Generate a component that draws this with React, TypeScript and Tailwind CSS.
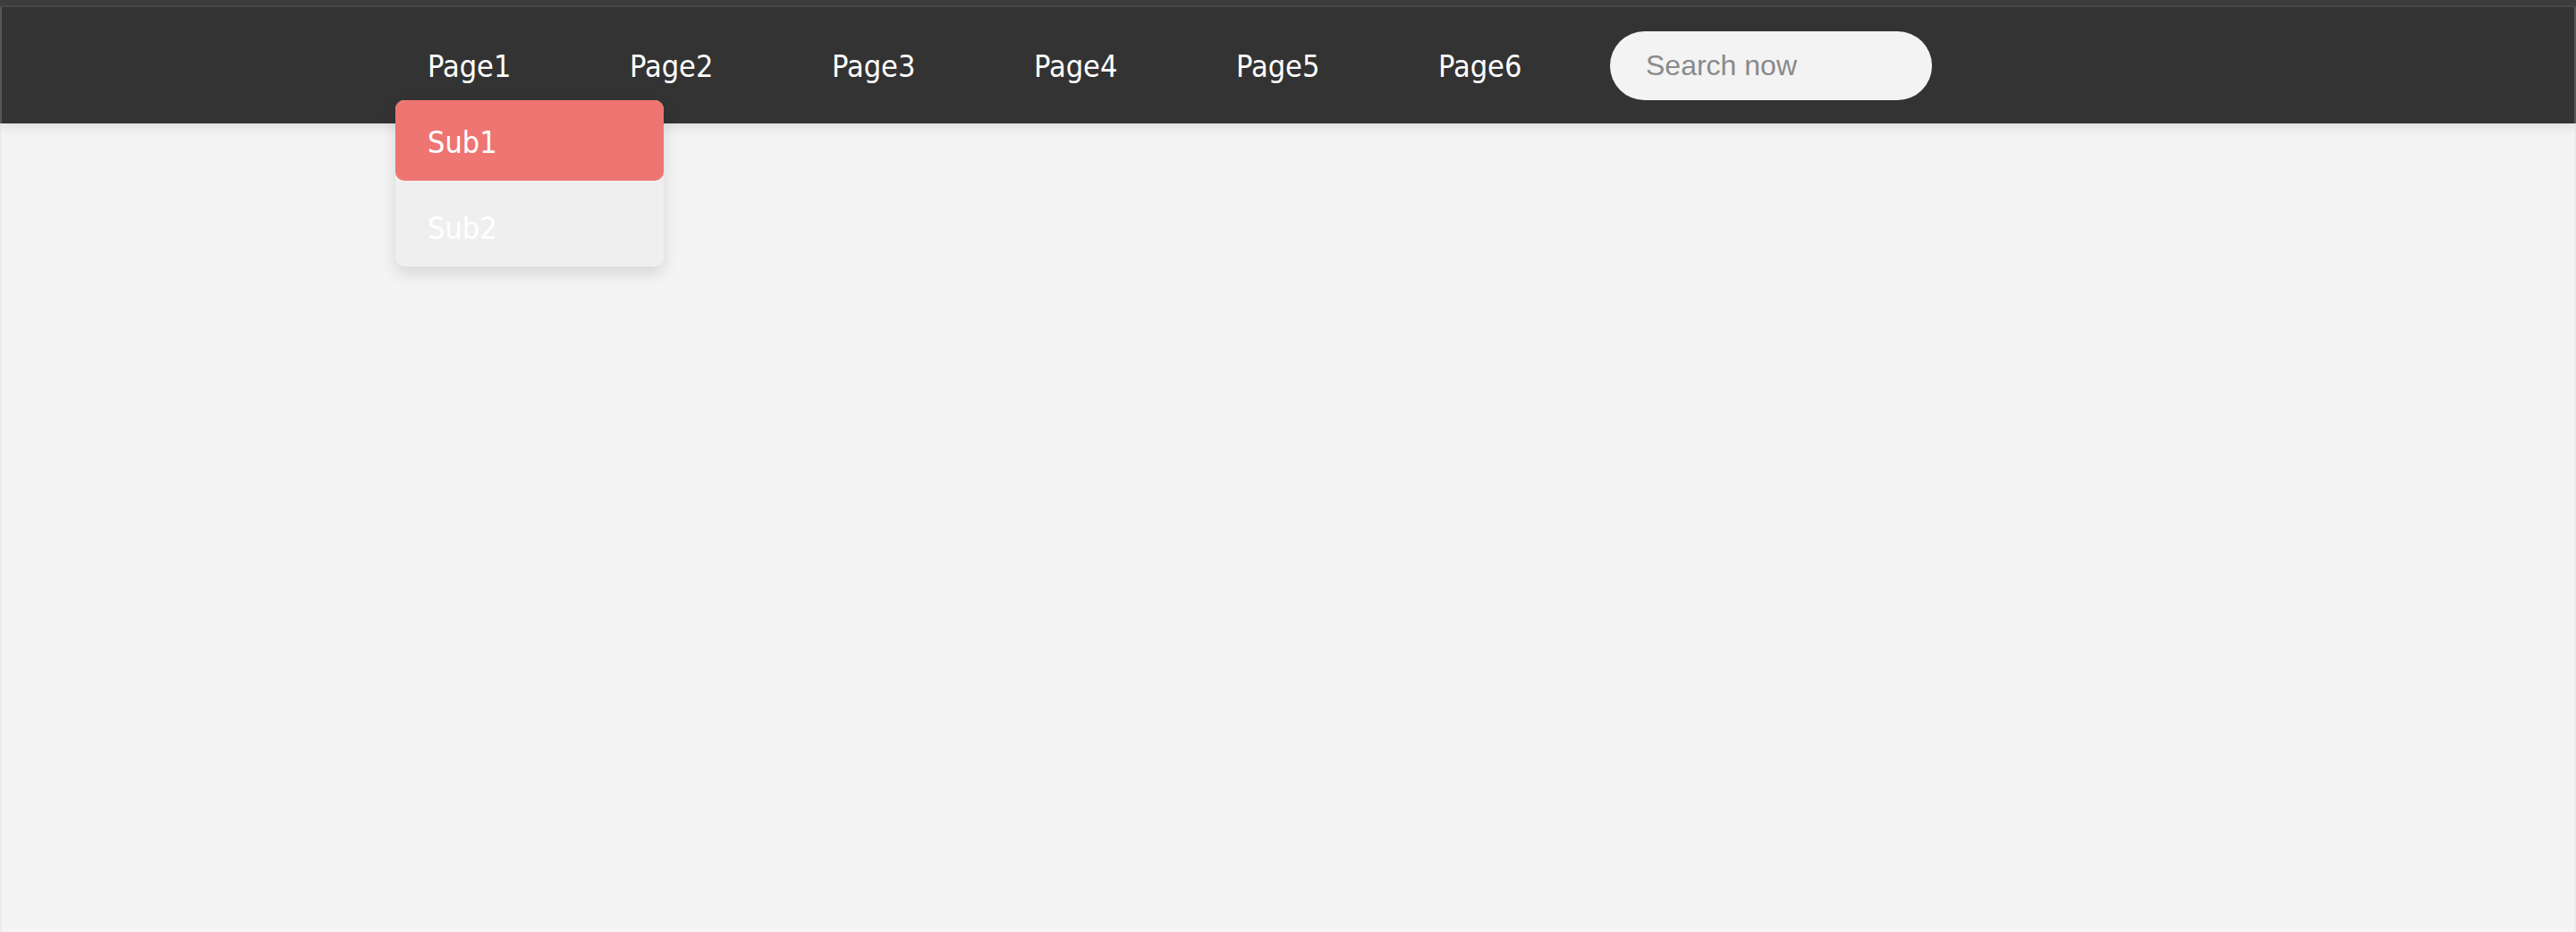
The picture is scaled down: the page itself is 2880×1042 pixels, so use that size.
import React from "react";

const pages = ["Page1", "Page2", "Page3", "Page4", "Page5", "Page6"];

export default function App() {
  const font = { fontFamily: '"DejaVu Sans Condensed", "DejaVu Sans", sans-serif' };
  return (
    <div className="min-h-[1042px] w-full bg-[#f4f4f4] border-l-2 border-r-2 border-[#ececec]" style={font}>
      <div className="relative z-10 -mx-[2px] shadow-[0_5px_12px_rgba(0,0,0,0.09)]">
        <div className="h-[6px] bg-[#3c3c3c]" />
        <div className="h-[2px] bg-[#484848]" />
        <nav className="h-[130px] bg-[#333333] border-l-2 border-r-2 border-[#575757]">
          <ul className="flex h-full items-start pl-[440px]">
            {pages.map((p, i) => (
              <li key={p} className="relative h-full w-[226px]">
                <a className="block pl-[36px] pt-[46px] text-[34px] leading-[40px] text-white">
                  {p}
                </a>
                {i === 0 && (
                  <div className="absolute left-0 top-[104px] w-[300px] rounded-[10px] bg-[#efefef] shadow-[0_8px_18px_rgba(0,0,0,0.12)]">
                    <div className="h-[90px] rounded-[10px] bg-[#ee7571] pl-[36px] pt-[27px] text-[34px] leading-[40px] text-white">
                      Sub1
                    </div>
                    <div className="h-[96px] pl-[36px] pt-[33px] text-[34px] leading-[40px] text-white">
                      Sub2
                    </div>
                  </div>
                )}
              </li>
            ))}
            <li className="ml-[2px] mt-[27px]">
              <input
                type="text"
                placeholder="Search now"
                className="h-[77px] w-[360px] rounded-full bg-[#f3f3f3] pl-[40px] text-[32px] text-[#555] outline-none placeholder:text-[#8a8a8a]"
                style={{ fontFamily: '"Liberation Sans", Arial, sans-serif' }}
              />
            </li>
          </ul>
        </nav>
      </div>
    </div>
  );
}
